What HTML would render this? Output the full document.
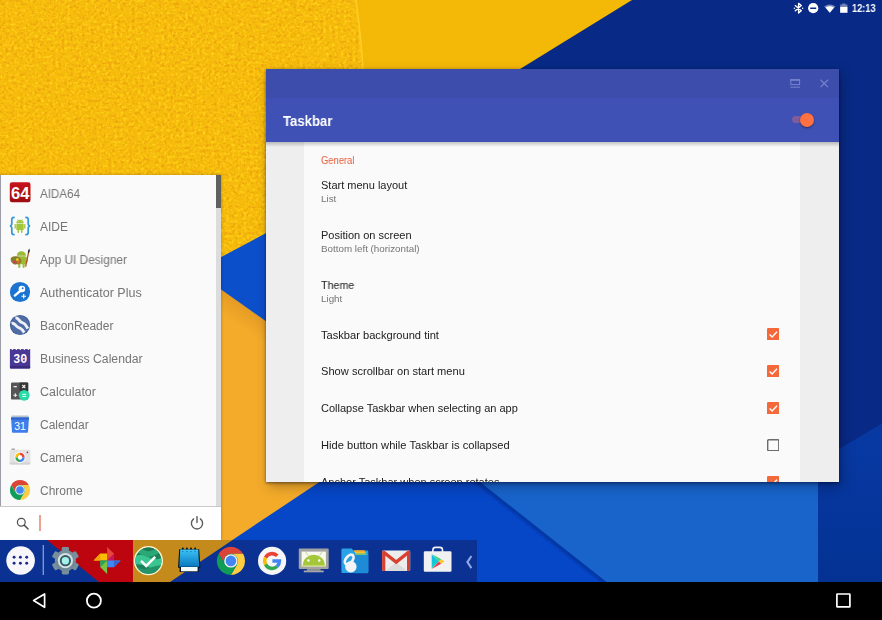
<!DOCTYPE html>
<html lang="en">
<head>
<meta charset="utf-8">
<title>Taskbar</title>
<style>
*{box-sizing:border-box;margin:0;padding:0}
html,body{width:882px;height:620px;overflow:hidden;background:#000}
body{position:relative;font-family:"Liberation Sans",Arial,sans-serif;-webkit-font-smoothing:antialiased}
.abs{position:absolute}
#wall{position:absolute;left:0;top:0;width:882px;height:620px;display:block}
.t{position:absolute;white-space:nowrap;transform-origin:0 50%;transform:scaleX(1.0005);will-change:transform}
/* window */
#win{position:absolute;left:266px;top:69px;width:573px;height:413px;background:#eeeeee;box-shadow:0 1px 3px rgba(0,0,20,.5),3px 5px 12px rgba(0,0,20,.26);overflow:hidden}
#cap{position:absolute;left:0;top:0;width:573px;height:29px;background:#3d4dab}
#bar{position:absolute;left:0;top:29px;width:573px;height:43.5px;background:#3f51b5}
#barsh{position:absolute;left:0;top:72.5px;width:573px;height:5px;background:linear-gradient(rgba(0,0,0,.22),rgba(0,0,0,0))}
#panel{position:absolute;left:38px;top:72.5px;width:496px;height:345px;background:#fafafa}
.p1{font-size:11px;line-height:14px;color:#212121}
.p2{font-size:9.8px;line-height:12px;color:#757575}
.cb{position:absolute;left:500.5px;width:12.5px;height:12.5px}
/* start menu */
#menu{position:absolute;left:0;top:175px;width:221px;height:365px;background:#fafafa;box-shadow:0 0 3px rgba(0,0,0,.3);overflow:hidden}
#menu .n{font-size:12px;line-height:14px;color:#757575;left:39.6px}
#sb{position:absolute;left:216px;top:0;width:5px;height:331px;background:#dcdcdc}
#sbt{position:absolute;left:216px;top:0;width:5px;height:33px;background:#606060}
#search{position:absolute;left:0;top:331px;width:221px;height:34px;background:#fff;border-top:1px solid #c9c9c9}
.ic{position:absolute;left:9px;width:22px;height:22px;display:block}
/* taskbar */
#task{position:absolute;left:0;top:540px;width:477px;height:42px;display:block}
#nav{position:absolute;left:0;top:582px;width:882px;height:38px;background:#000}
</style>
</head>
<body>
<!-- WALLPAPER -->
<svg id="wall" viewBox="0 0 882 620">
<defs>
<filter id="grain" x="0" y="0" width="100%" height="100%" color-interpolation-filters="sRGB">
<feTurbulence type="fractalNoise" baseFrequency="0.34" numOctaves="2" seed="11" result="n"/>
<feColorMatrix in="n" type="matrix" values="0 0 0 0 0.925  0 0 0 0 0.64  0 0 0 0 0.05  3.4 0 0 0 -1.62" result="dark"/>
<feColorMatrix in="n" type="matrix" values="0 0 0 0 1  0 0 0 0 0.82  0 0 0 0 0.09  0 -3.4 0 0 1.72" result="light"/>
<feMerge result="m"><feMergeNode in="SourceGraphic"/><feMergeNode in="dark"/><feMergeNode in="light"/></feMerge>
<feComposite in="m" in2="SourceGraphic" operator="in"/>
</filter>
<linearGradient id="osh" x1="0" y1="0" x2="0.55" y2="-0.8">
<stop offset="0" stop-color="#f6ad2c"/><stop offset="1" stop-color="#e79a1c"/>
</linearGradient>
<linearGradient id="osh2" gradientUnits="userSpaceOnUse" x1="247" y1="308" x2="236" y2="324"><stop offset="0" stop-color="#d98f1f" stop-opacity=".55"/><stop offset="1" stop-color="#d98f1f" stop-opacity="0"/></linearGradient>
<filter id="blur1" x="-10%" y="-10%" width="120%" height="120%"><feGaussianBlur stdDeviation="1.3"/></filter>
<linearGradient id="band" gradientUnits="userSpaceOnUse" x1="0" y1="440" x2="0" y2="582"><stop offset="0" stop-color="#0839a3"/><stop offset="1" stop-color="#033293"/></linearGradient>
</defs>
<rect width="882" height="620" fill="#f4b807"/>
<!-- textured yellow sheet -->
<path d="M0,0 L356,0 C359,22 362,45 363.5,80 L364,181 L0,375 Z" fill="#f6bc0c" filter="url(#grain)"/>
<path d="M356,0 C359,22 362,45 363.5,80 L364,181" fill="none" stroke="#ffcd24" stroke-width="1.6"/>
<!-- orange -->
<rect x="120" y="262" width="240" height="330" fill="#f4ab2a"/>
<polygon points="195,271 300,345.5 300,372 195,297" fill="url(#osh2)"/>
<!-- blue wedge between menu and window -->
<polygon points="195,271 300,215 300,345.5" fill="#0c4fcb"/>
<!-- bottom blues -->
<polygon points="322.4,480 169.4,582 882,582 882,400 830,440 830,480" fill="#0647c8"/>
<path d="M474,479 L607,584" stroke="#032c8c" stroke-opacity=".6" stroke-width="4.5" filter="url(#blur1)"/>
<polygon points="477.6,480 606.5,582 818,582 818,480" fill="#1864cb"/>
<polygon points="818,440 882,400 882,582 818,582" fill="url(#band)"/>
<!-- navy -->
<polygon points="632,0 882,0 882,423.5 839,449 520,449 520,69" fill="#082a86"/>
</svg>

<!-- STATUS BAR -->
<svg class="abs" style="left:790px;top:0;width:92px;height:18px" viewBox="790 0 92 18">
<!-- bluetooth -->
<path d="M795.3,5.6 L801.3,10.8 L798.6,13.1 L798.6,3.3 L801.3,5.6 L795.3,10.8" fill="none" stroke="#fff" stroke-width="1.35" stroke-linejoin="round" stroke-linecap="round"/>
<circle cx="794.4" cy="8.2" r="0.75" fill="#fff"/><circle cx="802.6" cy="8.2" r="0.75" fill="#fff"/>
<!-- dnd -->
<circle cx="813.2" cy="8.2" r="5.1" fill="#fff"/><rect x="810.2" y="7.5" width="6" height="1.5" fill="#082a86"/>
<!-- wifi -->
<path d="M824.2,6.4 Q829.8,2.6 835.4,6.4 L829.8,12.8 Z" fill="#fff" fill-opacity=".45"/>
<path d="M825.6,7.6 Q829.8,5 834,7.6 L829.8,12.8 Z" fill="#fff"/>
<!-- battery -->
<path d="M842.2,3.4 h3.2 v1.1 h2 v8.2 h-7.2 v-8.2 h2 z" fill="#fff" fill-opacity=".42"/>
<rect x="840.2" y="6.9" width="7.2" height="5.8" fill="#fff"/>
</svg>
<span class="t" id="clock" style="left:852.3px;top:0.9px;font-size:10.6px;line-height:14px;font-weight:bold;color:#fff;transform:scaleX(.87)">12:13</span>

<!-- WINDOW -->
<div id="win">
<div id="panel"></div>
<div id="cap"></div>
<div id="bar"></div>
<div id="barsh"></div>
<svg class="abs" style="left:520px;top:8px;width:46px;height:14px" viewBox="786 77 46 14">
<g fill="none" stroke="#7683ca" stroke-width="1">
<rect x="790.8" y="80" width="8.8" height="4.6" stroke-width="1"/>
<path d="M790.3,79.9 h9.8" stroke-width="1.6"/>
<path d="M790.3,87.2 h9.8" stroke-width="1"/>
<path d="M820.5,79.8 l7.5,7.3 M828,79.8 l-7.5,7.3" stroke-width="1.25"/>
</g>
</svg>
<span class="t" style="left:17px;top:42.5px;font-size:14.6px;line-height:18px;font-weight:bold;color:#fff;transform:scaleX(.9)">Taskbar</span>
<!-- switch -->
<div class="abs" style="left:526px;top:47.2px;width:18px;height:7px;border-radius:3.5px;background:#7f5c9b"></div>
<div class="abs" style="left:534px;top:43.8px;width:14.4px;height:14.4px;border-radius:50%;background:#ff7043;box-shadow:0 1px 2px rgba(0,0,0,.45)"></div>

<span class="t" style="left:55px;top:85.9px;font-size:10px;line-height:12px;color:#e75c39;transform:scaleX(.94)">General</span>

<span class="t p1" style="left:55px;top:108.9px">Start menu layout</span>
<span class="t p2" style="left:55px;top:124.3px">List</span>
<span class="t p1" style="left:55px;top:158.8px">Position on screen</span>
<span class="t p2" style="left:55px;top:174.2px">Bottom left (horizontal)</span>
<span class="t p1" style="left:55px;top:208.5px;transform:scaleX(.975)">Theme</span>
<span class="t p2" style="left:55px;top:224px">Light</span>

<span class="t p1" style="left:55px;top:258.6px;transform:scaleX(1.01)">Taskbar background tint</span>
<span class="t p1" style="left:55px;top:295.1px;transform:scaleX(1.01)">Show scrollbar on start menu</span>
<span class="t p1" style="left:55px;top:331.9px">Collapse Taskbar when selecting an app</span>
<span class="t p1" style="left:55px;top:368.8px;transform:scaleX(1.013)">Hide button while Taskbar is collapsed</span>
<span class="t p1" style="left:55px;top:405.6px">Anchor Taskbar when screen rotates</span>

<svg class="cb" style="top:258.8px" viewBox="0 0 12.5 12.5"><rect width="12.5" height="12.5" rx="1.3" fill="#f4683a"/><path d="M2.6,6.4 L5.1,8.9 L10,3.7" fill="none" stroke="#fff" stroke-width="1.4"/></svg>
<svg class="cb" style="top:295.6px" viewBox="0 0 12.5 12.5"><rect width="12.5" height="12.5" rx="1.3" fill="#f4683a"/><path d="M2.6,6.4 L5.1,8.9 L10,3.7" fill="none" stroke="#fff" stroke-width="1.4"/></svg>
<svg class="cb" style="top:332.6px" viewBox="0 0 12.5 12.5"><rect width="12.5" height="12.5" rx="1.3" fill="#f4683a"/><path d="M2.6,6.4 L5.1,8.9 L10,3.7" fill="none" stroke="#fff" stroke-width="1.4"/></svg>
<svg class="cb" style="top:369.6px" viewBox="0 0 12.5 12.5"><rect x=".7" y=".7" width="11.1" height="11.1" rx="1" fill="none" stroke="#6b6b6b" stroke-width="1.4"/></svg>
<svg class="cb" style="top:406.6px" viewBox="0 0 12.5 12.5"><rect width="12.5" height="12.5" rx="1.3" fill="#f4683a"/><path d="M2.6,6.4 L5.1,8.9 L10,3.7" fill="none" stroke="#fff" stroke-width="1.4"/></svg>
</div>

<!-- START MENU -->
<div id="menu">
<div id="sb"></div><div id="sbt"></div>
<div class="abs" style="left:0;top:0;width:1px;height:365px;background:#9a9ca8"></div>
<span class="t n" style="top:12px;transform:scaleX(.967)">AIDA64</span>
<span class="t n" style="top:45px">AIDE</span>
<span class="t n" style="top:78px;transform:scaleX(.989)">App UI Designer</span>
<span class="t n" style="top:111px;transform:scaleX(1.044)">Authenticator Plus</span>
<span class="t n" style="top:144px">BaconReader</span>
<span class="t n" style="top:177px;transform:scaleX(1.019)">Business Calendar</span>
<span class="t n" style="top:210px;transform:scaleX(1.035)">Calculator</span>
<span class="t n" style="top:243px">Calendar</span>
<span class="t n" style="top:276px">Camera</span>
<span class="t n" style="top:309px">Chrome</span>
<!--ICONS-START-->
<!-- AIDA64 -->
<svg class="ic" style="top:7.2px" viewBox="0 0 22 22"><defs><linearGradient id="gA" x1="0" y1="0" x2="0" y2="1"><stop offset="0" stop-color="#c8141c"/><stop offset="1" stop-color="#9c0d12"/></linearGradient></defs>
<rect x=".8" y=".3" width="20.7" height="20" rx="2.2" fill="url(#gA)"/>
<text x="11.3" y="16.6" text-anchor="middle" font-family="Liberation Sans,Arial,sans-serif" font-weight="bold" font-size="16.6" textLength="18.4" lengthAdjust="spacingAndGlyphs" fill="#fff">64</text></svg>
<!-- AIDE -->
<svg class="ic" style="top:39.7px" viewBox="0 0 22 22">
<g fill="none" stroke="#2f96d8" stroke-width="1.7" stroke-linecap="round">
<path d="M5,2.4 Q2.8,2.4 2.8,4.6 V8.6 Q2.8,10.9 .9,11 Q2.8,11.1 2.8,13.4 V17.4 Q2.8,19.6 5,19.6"/>
<path d="M17,2.4 Q19.2,2.4 19.2,4.6 V8.6 Q19.2,10.9 21.1,11 Q19.2,11.1 19.2,13.4 V17.4 Q19.2,19.6 17,19.6"/></g>
<g transform="translate(11 11.4) scale(.84) translate(-11 -11.2)"><g fill="#a4c639">
<path d="M6.6,7.4 A4.4,4.2 0 0 1 15.4,7.4 Z"/>
<rect x="6.6" y="8" width="8.8" height="7.6" rx="1"/>
<rect x="4.5" y="8.2" width="1.6" height="5.6" rx=".8"/><rect x="15.9" y="8.2" width="1.6" height="5.6" rx=".8"/>
<rect x="8" y="14.6" width="1.9" height="4.4" rx=".9"/><rect x="12.1" y="14.6" width="1.9" height="4.4" rx=".9"/>
</g>
<path d="M8,2.6 L9,4.2 M14,2.6 L13,4.2" stroke="#a4c639" stroke-width=".6"/>
<circle cx="9.1" cy="5.5" r=".5" fill="#fff"/><circle cx="12.9" cy="5.5" r=".5" fill="#fff"/></g>
</svg>
<!-- App UI Designer -->
<svg class="ic" style="top:72.7px" viewBox="0 0 22 22">
<g fill="#9bbb35">
<path d="M7.8,7.8 A4.6,4.6 0 0 1 17,7.8 Z"/>
<rect x="7.8" y="8.3" width="9.2" height="8" rx="1"/>
<rect x="9.3" y="15.4" width="2" height="4.6" rx="1"/><rect x="13.6" y="15.4" width="2" height="4.6" rx="1"/>
<rect x="17.3" y="8.6" width="1.6" height="5.4" rx=".8"/>
</g>
<path d="M1.6,11.6 C1.6,8.6 5.6,7.6 8.8,8.8 C12.2,10 13.4,13.4 11.4,15.6 C10,17.2 8.2,15.6 7,16.4 C5.8,17.2 2,15.6 1.6,11.6 Z" fill="#8a7a2f"/>
<circle cx="4.6" cy="11.2" r="1.3" fill="#6a8f2b"/><circle cx="8.4" cy="11.6" r="1.5" fill="#f0c419"/><circle cx="6" cy="14" r="1.4" fill="#d23a63"/><circle cx="9.6" cy="14.2" r="1.3" fill="#e86a1f"/>
<path d="M19.6,4.2 L16.6,18.6" stroke="#b5541e" stroke-width="1.3"/>
<path d="M20.4,.6 Q21.4,3 19.9,5 L18.9,4.6 Q18.8,2.2 20.4,.6 Z" fill="#1c1c28"/>
</svg>
<!-- Authenticator Plus -->
<svg class="ic" style="top:105.9px" viewBox="0 0 22 22">
<circle cx="11" cy="11" r="10.1" fill="#1b74cf"/>
<path d="M11.2,10 L5.8,14.6" stroke="#fff" stroke-width="2.3" stroke-linecap="round"/>
<circle cx="12.9" cy="8" r="3.3" fill="#fff"/><circle cx="13.7" cy="7.2" r=".95" fill="#1b74cf"/>
<path d="M12.4,15.2 h4.6 M14.7,12.9 v4.6" stroke="#fff" stroke-width="1.15"/>
</svg>
<!-- BaconReader -->
<svg class="ic" style="top:138.6px" viewBox="0 0 22 22">
<circle cx="11" cy="11" r="10.1" fill="#3f5c96"/><circle cx="11" cy="11" r="9.2" fill="#4f6ca6"/>
<g fill="none" stroke="#eef1f7" stroke-width="2.9" stroke-linecap="butt">
<path d="M2.6,9.4 C5,8.6 6.2,10.6 7.8,12.4 C9.4,14.2 11.6,13.6 13.4,16 C14.2,17 14.6,17.8 15.2,18.6"/>
<path d="M6.4,3.8 C8.6,3.6 9.6,5.6 11,7.2 C12.6,9 15,8.6 16.6,11 C17.6,12.4 18.2,13.4 18.8,14.6"/></g>
</svg>
<!-- Business Calendar -->
<svg class="ic" style="top:171.7px" viewBox="0 0 22 22">
<path d="M.9,2 h1.6 a.9,.9 0 0 0 1.8,0 h2.2 a.9,.9 0 0 0 1.8,0 h2.2 a.9,.9 0 0 0 1.8,0 h2.2 a.9,.9 0 0 0 1.8,0 h2.2 a.9,.9 0 0 0 1.8,0 h.9 v18.6 a1,1 0 0 1 -1,1 h-18.3 a1,1 0 0 1 -1,-1 z" fill="#4b3796"/>
<rect x=".9" y="19" width="20.3" height="2.6" rx="1" fill="#3a2a7c"/>
<text x="11.2" y="16.4" text-anchor="middle" font-family="Liberation Mono,monospace" font-weight="bold" font-size="12.5" textLength="14" lengthAdjust="spacingAndGlyphs" fill="#fff">30</text>
</svg>
<!-- Calculator -->
<svg class="ic" style="top:205.2px" viewBox="0 0 22 22">
<rect x="2" y="2.4" width="17.2" height="17.2" rx="1.2" fill="#555"/>
<path d="M10.6,2.4 h7.4 a1.2,1.2 0 0 1 1.2,1.2 v7.4 h-8.6 z" fill="#353535"/>
<path d="M4.6,6.6 h3.2 M4.4,15.2 h3.8 M6.3,13.3 v3.8 M13.3,5 l3,3 M16.3,5 l-3,3" stroke="#f0f0f0" stroke-width="1.1"/>
<circle cx="15.2" cy="15.3" r="5.4" fill="#25dba8"/>
<path d="M13.2,14.3 h4 M13.2,16.4 h4" stroke="#eafff8" stroke-width="1"/>
</svg>
<!-- Calendar -->
<svg class="ic" style="top:238.1px" viewBox="0 0 22 22">
<path d="M2.6,2.6 h16.8 l.6,2.6 h-18 z" fill="#b9c2cc"/>
<path d="M2,4.6 h18 l-1,14.4 a.8,.8 0 0 1 -.8,.7 h-14.4 a.8,.8 0 0 1 -.8,-.7 z" fill="#3f7eea"/>
<path d="M2,4.6 h18 l-.2,2.2 h-17.6 z" fill="#2f66cf"/>
<text x="11" y="17" text-anchor="middle" font-family="Liberation Sans,Arial,sans-serif" font-size="10.5" fill="#fff">31</text>
</svg>
<!-- Camera -->
<svg class="ic" style="top:270.8px" viewBox="0 0 22 22">
<rect x="2.4" y="2.6" width="3.6" height="2" rx=".5" fill="#9e9e9e"/>
<rect x=".6" y="3.8" width="20.8" height="14.6" rx="1.6" fill="#e2e2e2"/>
<rect x=".6" y="16.4" width="20.8" height="2" rx="1" fill="#d2d2d2"/>
<circle cx="18.4" cy="6.4" r=".8" fill="#c2185b"/>
<circle cx="11" cy="11.4" r="5.8" fill="#f4f4f4"/>
<g transform="translate(11 11.4)" fill="none" stroke-width="2.5">
<path d="M-3.4,0 A3.4,3.4 0 0 1 0,-3.4" stroke="#fbbc05"/>
<path d="M0,-3.4 A3.4,3.4 0 0 1 3.4,0" stroke="#ea4335"/>
<path d="M3.4,0 A3.4,3.4 0 0 1 0,3.4" stroke="#4285f4"/>
<path d="M0,3.4 A3.4,3.4 0 0 1 -3.4,0" stroke="#34a853"/>
</g>
<circle cx="11" cy="11.4" r="2.1" fill="#fff"/>
</svg>
<!-- Chrome -->
<svg class="ic" style="top:304.3px" viewBox="-11 -11 22 22">
<g transform="scale(.7163)">
<path d="M-12.21,-7.05 A14.1,14.1 0 0 1 12.21,-7.05 L0,-7.05 L-6.1,3.5 Z" fill="#db4437"/>
<path d="M12.21,-7.05 A14.1,14.1 0 0 1 0,14.1 L6.1,3.5 L0,-7.05 Z" fill="#ffcd40"/>
<path d="M0,14.1 A14.1,14.1 0 0 1 -12.21,-7.05 L-6.1,3.5 L6.1,3.5 Z" fill="#0f9d58"/>
<circle r="7.1" fill="#0f9d58"/><circle r="6.7" fill="#f1f1f1"/><circle r="5.3" fill="#4285f4"/>
</g></svg>
<!--ICONS-END-->
<div id="search">
<svg class="abs" style="left:14px;top:7px;width:18px;height:18px" viewBox="14 513 18 18"><circle cx="21.3" cy="521.2" r="3.9" fill="none" stroke="#505050" stroke-width="1.25"/><path d="M24.2,524.1 L28.1,528" stroke="#505050" stroke-width="1.5" stroke-linecap="round"/></svg>
<div class="abs" style="left:38.8px;top:7.5px;width:1.8px;height:16px;background:#eba28e"></div>
<svg class="abs" style="left:188px;top:7px;width:18px;height:18px" viewBox="187.5 513 18 18"><path d="M193.1,517.9 A5.6,5.6 0 1 0 199.9,517.9" fill="none" stroke="#5a5a5a" stroke-width="1.4" stroke-linecap="round"/><path d="M196.5,515.6 v6" stroke="#5a5a5a" stroke-width="1.4" stroke-linecap="round"/></svg>
</div>
</div>

<!-- TASKBAR -->
<svg id="task" viewBox="0 540 477 42">
<rect x="0" y="540" width="478" height="42" fill="#0b3193"/>
<polygon points="47,540 133,540 133,582 99,582" fill="#bd0510"/>
<polygon points="133,540 232.6,540 170,582 133,582" fill="#c48a1b"/>
<!--TASKICONS-START-->
<defs>
<linearGradient id="gNote" x1="0" y1="0" x2="0" y2="1"><stop offset="0" stop-color="#3cc4f7"/><stop offset="1" stop-color="#0876bd"/></linearGradient>
<radialGradient id="gChk" cx=".5" cy=".5" r=".5"><stop offset="0" stop-color="#3fd49a"/><stop offset="1" stop-color="#1f8f63"/></radialGradient>
<linearGradient id="gPlayL" x1="0" y1="0" x2="0" y2="1"><stop offset="0" stop-color="#17b6f0"/><stop offset="1" stop-color="#10d8c4"/></linearGradient>
<clipPath id="cGm"><rect x="382.1" y="550.4" width="28.1" height="20.5" rx="1.6"/></clipPath>
<clipPath id="cChk"><circle cx="148.4" cy="560.7" r="13.1"/></clipPath>
</defs>
<!-- app drawer -->
<circle cx="20.6" cy="560.5" r="14.3" fill="#f7f7fb"/>
<g fill="#1b2a86"><circle cx="14.1" cy="557.2" r="1.45"/><circle cx="20.4" cy="557.2" r="1.45"/><circle cx="26.7" cy="557.2" r="1.45"/><circle cx="14.1" cy="563.2" r="1.45"/><circle cx="20.4" cy="563.2" r="1.45"/><circle cx="26.7" cy="563.2" r="1.45"/></g>
<rect x="42.7" y="545" width="1.1" height="30" fill="#9fb0dc"/>
<!-- settings gear -->
<g transform="translate(65.4 560.7)">
<g fill="#78909c"><circle r="10.6"/>
<rect x="-3.6" y="-13.8" width="7.2" height="27.6" rx="1.4"/>
<rect x="-3.6" y="-13.8" width="7.2" height="27.6" rx="1.4" transform="rotate(60)"/>
<rect x="-3.6" y="-13.8" width="7.2" height="27.6" rx="1.4" transform="rotate(120)"/></g>
<path d="M-10.6,0 A10.6,10.6 0 0 0 10.6,0 Z" fill="#607d8b" fill-opacity=".35"/>
<circle r="7.6" fill="#d5e0e4"/><circle r="5.6" fill="#335a60"/><circle r="3.7" fill="#a5f1ec"/>
</g>
<!-- photos pinwheel -->
<g transform="translate(107.1 560.4)">
<polygon points="0,0 -13.5,0 -6.8,-6.8 0,-6.8" fill="#fbbc05"/><polygon points="-13.5,0 -6.8,-6.8 -6.8,0" fill="#f59f0a"/>
<polygon points="0,0 0,-13.5 6.8,-6.8 6.8,0" fill="#e8453c"/><polygon points="0,0 6.8,-6.8 6.8,0" fill="#c2185b"/>
<polygon points="0,0 13.5,0 6.8,6.8 0,6.8" fill="#4285f4"/><polygon points="13.5,0 6.8,6.8 6.8,0" fill="#3367d6"/>
<polygon points="0,0 0,13.5 -6.8,6.8 -6.8,0" fill="#7cc142"/><polygon points="0,0 -6.8,6.8 -6.8,0" fill="#27a35a"/>
</g>
<!-- green check -->
<circle cx="148.4" cy="560.7" r="14.6" fill="#fdf2cf"/>
<circle cx="148.4" cy="560.7" r="13.1" fill="#1d8159"/>
<g clip-path="url(#cChk)">
<path d="M133,558 Q140,552 148,557 T165,556 L165,566 Q156,571 148,567 T133,565 Z" fill="#39c690"/>
<path d="M140,546 Q148,556 157,547 L160,552 Q148,562 137,551 Z" fill="#2aa878"/>
<path d="M133,565 Q141,571 149,568 T165,565 L165,580 L133,580 Z" fill="#239469"/>
<path d="M140,548 Q148,541 157,548 Q148,553 140,548 Z" fill="#1a7752"/>
</g>
<path d="M141,560.9 L146.2,565.9 L155.2,556.9" fill="none" stroke="#fff" stroke-width="2.6"/>
<!-- notepad -->
<path d="M179.2,549.3 h20 l1.2,18.4 h-1.6 v4.3 h-19.2 v-4.3 h-1.6 z" fill="#06131f"/>
<path d="M180.2,549.6 h18 l1,17.2 h-20 z" fill="url(#gNote)"/>
<rect x="181" y="567" width="16.6" height="4.3" fill="#f4fbff"/>
<g fill="#06131f"><circle cx="182.8" cy="548.6" r="1"/><circle cx="186.9" cy="548.6" r="1"/><circle cx="191" cy="548.6" r="1"/><circle cx="195.1" cy="548.6" r="1"/></g>
<g fill="#0a6fb0"><circle cx="182.8" cy="551.6" r=".7"/><circle cx="186.9" cy="551.6" r=".7"/><circle cx="191" cy="551.6" r=".7"/><circle cx="195.1" cy="551.6" r=".7"/></g>
<!-- chrome -->
<g transform="translate(230.9 560.9)">
<path d="M-12.21,-7.05 A14.1,14.1 0 0 1 12.21,-7.05 L0,-7.05 L-6.1,3.5 Z" fill="#db4437"/>
<path d="M12.21,-7.05 A14.1,14.1 0 0 1 0,14.1 L6.1,3.5 L0,-7.05 Z" fill="#ffcd40"/>
<path d="M0,14.1 A14.1,14.1 0 0 1 -12.21,-7.05 L-6.1,3.5 L6.1,3.5 Z" fill="#0f9d58"/>
<circle r="7.1" fill="#0f9d58"/>
<circle r="6.7" fill="#f1f1f1"/><circle r="5.3" fill="#4285f4"/>
</g>
<!-- google G -->
<circle cx="272.1" cy="560.9" r="14.1" fill="#f6f6f6"/>
<g transform="translate(272.1 561)" fill="none" stroke-width="3.5">
<path d="M5.2,-5.2 A7.35,7.35 0 0 0 -6.55,-3.35" stroke="#ea4335"/>
<path d="M-6.55,-3.35 A7.35,7.35 0 0 0 -6.55,3.35" stroke="#fbbc05"/>
<path d="M-6.55,3.35 A7.35,7.35 0 0 0 4.9,5.5" stroke="#34a853"/>
<path d="M4.9,5.5 A7.35,7.35 0 0 0 7.35,0 L0.3,0" stroke="#4285f4"/>
</g>
<!-- android monitor -->
<rect x="298.8" y="548.6" width="29.9" height="20.4" rx="1" fill="#a3a3a3"/>
<rect x="301.6" y="551.6" width="24.3" height="14.8" fill="#f7f9ee"/>
<rect x="301.4" y="565" width="24.7" height="1.4" fill="#cde07a"/>
<path d="M302.9,565.2 A10.9,10.4 0 0 1 324.7,565.2 Z" fill="#a4c639"/>
<path d="M305.6,551.8 L308,555.6 M322,551.8 L319.6,555.6" stroke="#b7c98a" stroke-width=".8"/>
<circle cx="308.4" cy="560.5" r="1.2" fill="#fff"/><circle cx="319.2" cy="560.5" r="1.2" fill="#fff"/>
<rect x="307" y="569" width="13.6" height="1.8" fill="#8e8e8e"/>
<rect x="303.8" y="570.5" width="19.9" height="1.8" fill="#a8a8a8"/>
<!-- solid explorer -->
<path d="M342.6,548.6 h9 l2,2 h13.5 a1.2,1.2 0 0 1 1.2,1.2 v20 a1.2,1.2 0 0 1 -1.2,1.2 h-24.5 a1.2,1.2 0 0 1 -1.2,-1.2 v-22 a1.2,1.2 0 0 1 1.2,-1.2 z" fill="#2aa2e6"/>
<rect x="354.2" y="550.2" width="10.6" height="1.8" fill="#f5a623"/>
<rect x="355" y="551.8" width="10.6" height="1.8" fill="#f7c531"/>
<rect x="356" y="553.4" width="10.2" height="1.6" fill="#7fc66a"/>
<path d="M353.5,555 h14.8 v17 a1.2,1.2 0 0 1 -1.2,1.2 h-13.6 z" fill="#1e8bd6"/>
<ellipse cx="349.2" cy="559.6" rx="3.3" ry="5.6" transform="rotate(38 349.2 559.6)" fill="none" stroke="#f3f3f5" stroke-width="2.8"/>
<circle cx="350.9" cy="566.7" r="5.7" fill="#f3f3f5"/>
<!-- gmail -->
<rect x="382.1" y="550.4" width="28.1" height="20.5" rx="1.4" fill="#ededed"/>
<path d="M385.4,570.9 L396.15,562.3 L406.9,570.9 Z" fill="#dcdcdc"/>
<path d="M383.6,570.9 V552.2 L396.15,562 L408.7,552.2 V570.9" fill="none" stroke="#d8412f" stroke-width="3.4" stroke-linejoin="miter" clip-path="url(#cGm)"/>
<!-- play store -->
<path d="M432.9,552 V550 a2.6,2.6 0 0 1 2.6,-2.6 h4.4 a2.6,2.6 0 0 1 2.6,2.6 V552" fill="none" stroke="#f2f2f2" stroke-width="1.6"/>
<rect x="423.8" y="551.2" width="27.7" height="20.6" rx="1.2" fill="#f1f1f1"/>
<g>
<path d="M431.7,554.4 L431.7,568.6 L438.9,561.5 Z" fill="url(#gPlayL)"/>
<path d="M431.7,554.1 L441.3,559.2 L438.9,561.5 Z" fill="#3bd48a"/>
<path d="M431.7,568.9 L441.3,563.8 L438.9,561.5 Z" fill="#ee3b4a"/>
<path d="M441.3,559.2 L444.6,561.5 L441.3,563.8 L438.9,561.5 Z" fill="#ffc928"/>
</g>
<!-- chevron -->
<path d="M471.4,556 L467.4,562.1 L471.4,568.2" fill="none" stroke="#8fa8e8" stroke-width="2.1"/>
<!--TASKICONS-END-->
</svg>

<!-- NAV BAR -->
<div id="nav">
<svg class="abs" style="left:0;top:0;width:882px;height:38px" viewBox="0 582 882 38">
<path d="M44.6,593.9 L44.6,607.3 L33.6,600.6 Z" fill="none" stroke="#fff" stroke-width="1.7" stroke-linejoin="round"/>
<circle cx="93.9" cy="600.7" r="7" fill="none" stroke="#fff" stroke-width="1.8"/>
<rect x="836.9" y="594" width="13" height="12.8" rx=".4" fill="none" stroke="#fff" stroke-width="1.7"/>
</svg>
</div>
</body>
</html>
